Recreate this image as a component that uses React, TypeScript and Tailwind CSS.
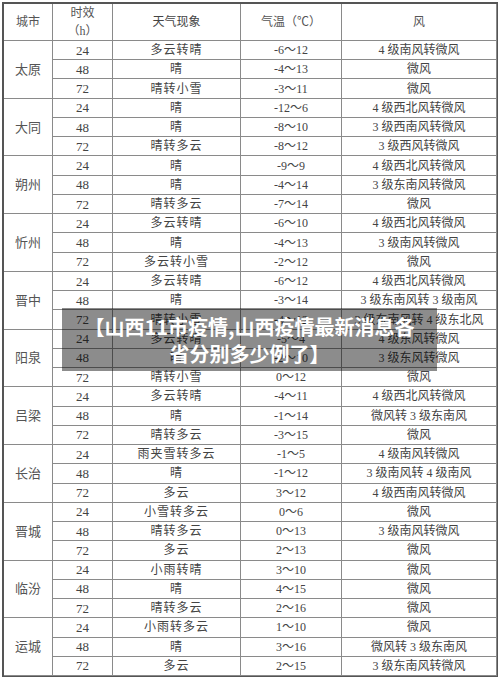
import React from "react";

type Row = [string, string, string, string];
const data: { city: string; rows: Row[] }[] = [
  { city: "太原", rows: [["24", "多云转晴", "-6～12", "4 级南风转微风"], ["48", "晴", "-4～13", "微风"], ["72", "晴转小雪", "-3～11", "微风"]] },
  { city: "大同", rows: [["24", "晴", "-12～6", "4 级西北风转微风"], ["48", "晴", "-8～10", "3 级西南风转微风"], ["72", "晴转多云", "-8～12", "3 级西风转微风"]] },
  { city: "朔州", rows: [["24", "晴", "-9～9", "4 级西北风转微风"], ["48", "晴", "-4～14", "3 级东南风转微风"], ["72", "晴转多云", "-7～14", "微风"]] },
  { city: "忻州", rows: [["24", "多云转晴", "-6～10", "4 级西北风转微风"], ["48", "晴", "-4～13", "3 级南风转微风"], ["72", "多云转小雪", "-2～12", "微风"]] },
  { city: "晋中", rows: [["24", "多云转晴", "-6～12", "4 级西北风转微风"], ["48", "晴", "-3～14", "3 级东南风转 3 级南风"], ["72", "晴转小雪", "-4～12", "3 级东南风转 4 级东北风"]] },
  { city: "阳泉", rows: [["24", "多云转晴", "-5～4", "4 级东风转微风"], ["48", "晴", "-2～10", "3 级东风转微风"], ["72", "晴转小雪", "0～12", "微风"]] },
  { city: "吕梁", rows: [["24", "多云转晴", "-4～11", "4 级西北风转微风"], ["48", "晴", "-1～14", "微风转 3 级东南风"], ["72", "晴转多云", "-3～15", "微风"]] },
  { city: "长治", rows: [["24", "雨夹雪转多云", "-1～5", "4 级南风转微风"], ["48", "晴", "-1～12", "3 级南风转 4 级南风"], ["72", "多云", "3～12", "4 级西南风转微风"]] },
  { city: "晋城", rows: [["24", "小雪转多云", "0～6", "微风"], ["48", "晴转多云", "0～13", "3 级南风转微风"], ["72", "多云", "2～13", "微风"]] },
  { city: "临汾", rows: [["24", "小雨转晴", "3～10", "微风"], ["48", "晴", "4～15", "微风"], ["72", "晴转多云", "2～16", "微风"]] },
  { city: "运城", rows: [["24", "小雨转多云", "1～10", "微风"], ["48", "晴", "3～16", "微风转 3 级东南风"], ["72", "多云", "2～15", "3 级东南风转微风"]] },
];

const font = { fontFamily: '"Liberation Serif", "Noto Sans CJK SC", serif' };

const cell =
  "flex items-center justify-center border-r border-b border-[#8a8a8a] text-[12px] leading-none text-[#444] whitespace-nowrap overflow-hidden";

export default function App() {
  return (
    <div className="relative w-[500px] h-[679px] bg-white pl-[3px] pt-[3px]" style={font}>
      <div
        className="grid w-[494px] h-[673px] border-t border-l border-[#555] outline outline-1 outline-[#555]"
        style={{
          gridTemplateColumns: "49px 60px 128px 101px 155px",
          gridTemplateRows: "37px repeat(33, minmax(0, 1fr))",
        }}
      >
        <div className={cell + " text-[#555]"}>城市</div>
        <div className={cell + " flex-col gap-[6px] text-[#555]"}>
          <span>时效</span>
          <span>（h）</span>
        </div>
        <div className={cell}>天气现象</div>
        <div className={cell + " text-[#555]"}>气温（℃）</div>
        <div className={cell + " text-[#555]"}>风</div>
        {data.map((g) => (
          <React.Fragment key={g.city}>
            <div className={cell + " row-span-3 text-[13px] text-[#555]"}>{g.city}</div>
            {g.rows.map((r, i) => (
              <React.Fragment key={i}>
                <div className={cell + " text-[13px] text-[#1a1a1a]"}>{r[0]}</div>
                <div className={cell + " tracking-[1px]"}>{r[1]}</div>
                <div className={cell + " text-[12.5px] text-[#333]"}>{r[2]}</div>
                <div className={cell}>{r[3]}</div>
              </React.Fragment>
            ))}
          </React.Fragment>
        ))}
      </div>
      <div
        className="absolute left-[62px] top-[308px] w-[375px] h-[63px] bg-[rgba(0,0,0,0.45)] flex flex-col items-center justify-center text-white font-bold text-[20px] leading-[27px]"
        style={{ fontFamily: '"Noto Sans CJK SC", "Noto Sans", sans-serif' }}
      >
        <span className="whitespace-nowrap">【山西11市疫情,山西疫情最新消息各</span>
        <span className="whitespace-nowrap">省分别多少例了】</span>
      </div>
    </div>
  );
}
